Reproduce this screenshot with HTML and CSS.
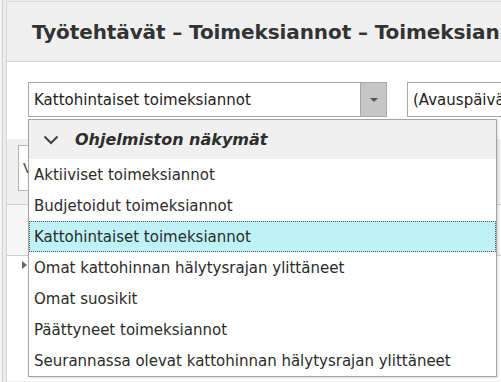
FILE: index.html
```html
<!DOCTYPE html>
<html lang="fi">
<head>
    <meta charset="UTF-8">
    <title>Työtehtävät</title>
    <link rel="stylesheet" href="styles.css">
</head>
<body>
    <div class="app">
        <div class="panel">
            <header class="page-header">
                <h1>Työtehtävät – Toimeksiannot – Toimeksiannot</h1>
            </header>

            <section class="filters">
                <div class="combo combo-view">
                    <span class="combo-text">Kattohintaiset toimeksiannot</span>
                    <span class="combo-button"><span class="caret"></span></span>
                </div>
                <div class="combo combo-sort">
                    <span class="combo-text">(Avauspäivä)</span>
                </div>
            </section>

            <section class="workspace">
                <div class="toolbar">
                    <div class="search-box">V</div>
                </div>
                <div class="grid-header"></div>
                <div class="grid-row"><span class="row-marker"></span></div>
            </section>
        </div>

        <!-- Open dropdown of the view combo -->
        <div class="dropdown">
            <div class="dropdown-group">
                <svg class="chevron" width="16" height="10" viewBox="0 0 16 10">
                    <path d="M1.5 1.5 L8 8 L14.5 1.5" fill="none" stroke="#444" stroke-width="2"/>
                </svg>
                <span>Ohjelmiston näkymät</span>
            </div>
            <ul class="dropdown-list">
                <li>Aktiiviset toimeksiannot</li>
                <li>Budjetoidut toimeksiannot</li>
                <li class="selected">Kattohintaiset toimeksiannot</li>
                <li>Omat kattohinnan hälytysrajan ylittäneet</li>
                <li>Omat suosikit</li>
                <li>Päättyneet toimeksiannot</li>
                <li>Seurannassa olevat kattohinnan hälytysrajan ylittäneet</li>
            </ul>
        </div>
    </div>
</body>
</html>
```

FILE: styles.css
```css
/* General Reset */
body {
    margin: 0;
    font-family: 'DejaVu Sans', 'Liberation Sans', sans-serif;
    color: #2b2b2b;
    background-color: #f4f4f4;
    overflow: hidden;
}

.app {
    position: relative;
    width: 501px;
    height: 382px;
    margin-left: 2px;
    border-left: 1px solid #d2d2d2;
    padding-left: 3px;
    background-color: #ececec;
    overflow: hidden;
}

.panel {
    height: 380px;
    margin-top: 1px;
    border-top: 1px solid #dcdcdc;
    border-left: 1px solid #d6d6d6;
    background-color: #f0f0f0;
}

/* Header */
.page-header {
    height: 59px;
    border-bottom: 1px solid #d4d4d4;
    padding-left: 25px;
    background-color: #f0f0f0;
    white-space: nowrap;
    overflow: hidden;
}

.page-header h1 {
    margin: 0;
    font-family: 'DejaVu Sans', 'Liberation Sans', sans-serif;
    font-size: 20px;
    font-weight: bold;
    letter-spacing: -0.1px;
    line-height: 61px;
    color: #333;
}

/* Filters */
.filters {
    display: flex;
    gap: 20px;
    padding: 20px 0 22px 21px;
    background-color: #fff;
    white-space: nowrap;
}

.combo {
    display: flex;
    flex-shrink: 0;
    align-items: center;
    height: 33px;
    border: 1px solid #a8a8a8;
    background-color: #fff;
    font-size: 15px;
    color: #222;
}

.combo-view {
    width: 357px;
}

.combo-sort {
    width: 120px;
}

.combo-text {
    flex: 1;
    padding-left: 5px;
    overflow: hidden;
}

.combo-button {
    display: flex;
    align-items: center;
    justify-content: center;
    width: 25px;
    height: 100%;
    border-left: 1px solid #a8a8a8;
    background-color: #c6c6c6;
}

.caret {
    width: 0;
    height: 0;
    border-left: 4px solid transparent;
    border-right: 4px solid transparent;
    border-top: 4px solid #555;
}

/* Area behind the dropdown */
.workspace {
    background-color: #f0f0f0;
}

.toolbar {
    height: 66px;
    padding: 6px 0 0 11px;
    box-sizing: border-box;
    border-bottom: 1px solid #cfcfcf;
}

.search-box {
    width: 40px;
    height: 44px;
    border: 1px solid #b5b5b5;
    background-color: #fff;
    font-size: 14px;
    line-height: 44px;
    padding-left: 4px;
    color: #444;
}

.grid-header {
    height: 50px;
    border-bottom: 1px solid #cfcfcf;
    background-color: #f7f7f7;
}

.grid-row {
    height: 120px;
    padding: 5px 0 0 15px;
    background-color: #fff;
}

.row-marker {
    display: block;
    width: 0;
    height: 0;
    border-top: 4px solid transparent;
    border-bottom: 4px solid transparent;
    border-left: 5px solid #666;
}

/* Dropdown */
.dropdown {
    position: absolute;
    left: 25px;
    top: 119px;
    width: 467px;
    border: 1px solid #a4a4a4;
    background-color: #fff;
    box-shadow: 1px 1px 2px rgba(0, 0, 0, 0.15);
    white-space: nowrap;
}

.dropdown-group {
    display: flex;
    align-items: center;
    height: 39px;
    background-color: #f0f0f0;
    font-size: 16px;
    font-weight: bold;
    font-style: italic;
    color: #2e2e2e;
}

.chevron {
    margin: 0 16px 0 14px;
}

.dropdown-list {
    list-style: none;
    margin: 0;
    padding: 0;
}

.dropdown-list li {
    height: 31px;
    line-height: 33px;
    padding-left: 5px;
    font-size: 15px;
    color: #2b2b2b;
    box-sizing: border-box;
}

.dropdown-list li.selected {
    background-color: #bff2f6;
    border: 1px dotted #555;
    line-height: 31px;
    padding-left: 4px;
}
```
